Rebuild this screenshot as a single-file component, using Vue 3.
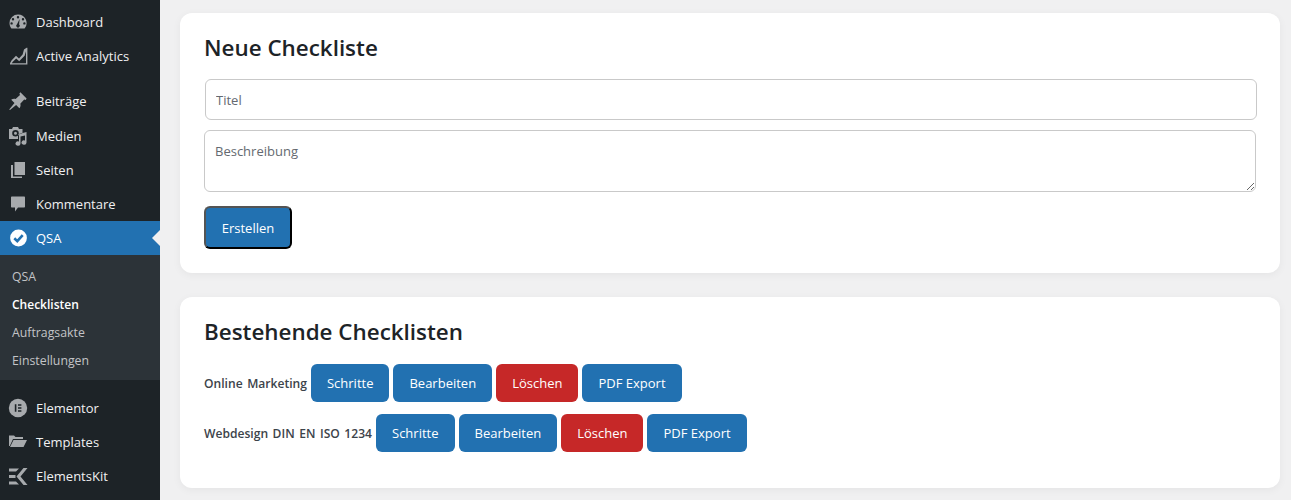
<script setup>
const top = [
  { label: 'Dashboard', icon: 'dash' },
  { label: 'Active Analytics', icon: 'chart' },
]
const mid = [
  { label: 'Beiträge', icon: 'pin' },
  { label: 'Medien', icon: 'media' },
  { label: 'Seiten', icon: 'pages' },
  { label: 'Kommentare', icon: 'comment' },
]
const sub = ['QSA', 'Checklisten', 'Auftragsakte', 'Einstellungen']
const bottom = [
  { label: 'Elementor', icon: 'elementor' },
  { label: 'Templates', icon: 'folder' },
  { label: 'ElementsKit', icon: 'ek' },
]
const paths = {
  dash: 'M10 2.5a8.5 8.5 0 0 0-8.5 8.5c0 2 .7 3.9 1.9 5.4h13.2A8.5 8.5 0 0 0 10 2.5zM10 4a1.2 1.2 0 1 1 0 2.4A1.2 1.2 0 0 1 10 4zM5 6a1.2 1.2 0 1 1 0 2.4A1.2 1.2 0 0 1 5 6zm10 0a1.2 1.2 0 1 1 0 2.4A1.2 1.2 0 0 1 15 6zM3.6 10.2a1.2 1.2 0 1 1 0 2.4 1.2 1.2 0 0 1 0-2.4zm12.8 0a1.2 1.2 0 1 1 0 2.4 1.2 1.2 0 0 1 0-2.4zM11.6 7l-.5 5.6a1.7 1.7 0 1 1-2.2 0z',
  chart: 'M2 18.5V17.2L3.5 14.5 8 9.8 11 12.6 14.6 8.6 16 3.6 18.6 1.8H19.4V18.5H2zM3.8 17.2H18V5.2L16.6 9.8 11.2 15.2 8.2 12.4 4.8 15.8z',
  pin: 'M18.6 7.4 12.4 1.3l-1 1.1.6 1.6-4.4 3.9c-1.5-.5-3.2-.2-4.4.9l3.3 3.3L1.2 18.6 2 18.9l6.1-5 3.3 3.3c1.1-1.2 1.5-2.9.9-4.4l3.9-4.4 1.5.6z',
  media: 'M1 3h3l1-2h5l1 2h3.5v4.4L10 8.4V13H1zM7.5 4a3.3 3.3 0 1 0 0 6.6 3.3 3.3 0 0 0 0-6.6zM7.5 5.8a1.5 1.5 0 1 1 0 3 1.5 1.5 0 0 1 0-3zM18.5 6v10.5a2.5 2.2 0 1 1-1.5-2V9.5l-4.5 1v7a2.5 2.2 0 1 1-1.5-2V8z',
  pages: 'M6.5 2H17v13H6.5zM3 5h2v11.5h9V18H3z',
  comment: 'M4 2.5h12c.6 0 1 .4 1 1v9c0 .6-.4 1-1 1h-6l-3 4v-4H4c-.6 0-1-.4-1-1v-9c0-.6.4-1 1-1z',
  folder: 'M1 14V3.5h5l1.5 1.5H15v2H5L1.8 14zM5.5 8H19l-3.5 7H2z',
  ek: 'M1 2.5h10l-3 3H1zM1 9h6.5v3H1zM1 15.5h7l3 3H1zM15.5 2H19.5L12.5 10.5 19.5 19H15.5L8.5 10.5z',
}
const lists = ['Online Marketing', 'Webdesign DIN EN ISO 1234']
</script>

<template>
  <div class="page">
    <aside class="side">
      <ul class="group">
        <li v-for="i in top" :key="i.label" class="item">
          <svg class="ico" viewBox="0 0 20 20"><path fill-rule="evenodd" :d="paths[i.icon]" /></svg>
          <span>{{ i.label }}</span>
        </li>
      </ul>
      <ul class="group mid">
        <li v-for="i in mid" :key="i.label" class="item">
          <svg class="ico" viewBox="0 0 20 20"><path fill-rule="evenodd" :d="paths[i.icon]" /></svg>
          <span>{{ i.label }}</span>
        </li>
        <li class="item current">
          <svg class="ico" viewBox="0 0 20 20">
            <circle cx="10.5" cy="10" r="8.4" fill="#fff" />
            <path class="tick" d="M6.3 10.3 9.3 13.2 14.7 7.2" />
          </svg>
          <span>QSA</span>
        </li>
      </ul>
      <ul class="submenu">
        <li v-for="s in sub" :key="s" :class="{ on: s === 'Checklisten' }">{{ s }}</li>
      </ul>
      <ul class="group">
        <li v-for="i in bottom" :key="i.label" class="item">
          <svg v-if="i.icon === 'elementor'" class="ico" viewBox="0 0 20 20">
            <circle cx="10" cy="10" r="9.2" />
            <path class="cut" d="M6.800 6.200h1.600v7.600H6.800zM10 6.200h3.400v1.500H10zM10 9.200h3.400v1.500H10zM10 12.300h3.400v1.500H10z" />
          </svg>
          <svg v-else class="ico" viewBox="0 0 20 20"><path fill-rule="evenodd" :d="paths[i.icon]" /></svg>
          <span>{{ i.label }}</span>
        </li>
      </ul>
    </aside>
    <main class="main">
      <section class="card first">
        <h2>Neue Checkliste</h2>
        <input class="title-input" type="text" placeholder="Titel" />
        <textarea class="desc" placeholder="Beschreibung"></textarea>
        <button class="create" type="button">Erstellen</button>
      </section>
      <section class="card second">
        <h2>Bestehende Checklisten</h2>
        <div v-for="l in lists" :key="l" class="row">
          <strong>{{ l }}</strong>
          <a class="btn">Schritte</a>
          <a class="btn">Bearbeiten</a>
          <a class="btn red">Löschen</a>
          <a class="btn">PDF Export</a>
        </div>
      </section>
    </main>
  </div>
</template>

<style>
html, body { margin: 0; background: #f0f0f1; }
</style>

<style scoped>
* { box-sizing: border-box; }
.page {
  display: flex;
  height: 500px;
  overflow: hidden;
  font-family: "Open Sans", "Noto Sans", sans-serif;
  background: #f0f0f1;
}
.side {
  width: 160px;
  flex: none;
  background: #1d2327;
  padding-top: 5px;
  display: flex;
  flex-direction: column;
}
ul { list-style: none; margin: 0; padding: 0; }
.group + .group { margin-top: 11px; }
.submenu + .group { margin-top: 11px; }
.item {
  height: 34px;
  display: flex;
  align-items: center;
  gap: 8px;
  padding-left: 8px;
  color: #f0f0f1;
  font-size: 13px;
  position: relative;
}
.mid .item:first-child { height: 35px; padding-bottom: 1px; }
.ico { width: 20px; height: 20px; flex: none; fill: #a7aaad; }
.current { background: #2271b1; color: #fff; }
.current::after {
  content: "";
  position: absolute;
  right: 0;
  top: 50%;
  margin-top: -8px;
  border: 8px solid transparent;
  border-right-color: #f0f0f1;
}
.tick { fill: none; stroke: #2271b1; stroke-width: 2.6; }
.cut { fill: #1d2327; }
.submenu {
  background: #2c3338;
  padding: 8px 0 5px;
}
.submenu li {
  height: 28px;
  line-height: 28px;
  padding-left: 12px;
  font-size: 12.3px;
  color: #c3c4c7;
}
.submenu .on { color: #fff; font-weight: 600; font-size: 12px; }
.main {
  flex: 1;
  min-width: 0;
  padding: 13px 11px 0 20px;
  display: flex;
  flex-direction: column;
  gap: 24px;
}
.card {
  background: #fff;
  border-radius: 12px;
  box-shadow: 0 2px 8px rgba(0, 0, 0, 0.05);
  padding: 19px 24px;
}
.first { height: 260px; }
.second { height: 191px; }
h2 {
  margin: 0;
  font-size: 22.4px;
  line-height: 31px;
  font-weight: 600;
  color: #1d2327;
}
.title-input, .desc {
  display: block;
  width: 100%;
  border: 1px solid #c9c9c9;
  border-radius: 6px;
  background: #fff;
  font: inherit;
  font-size: 13px;
  color: #2c3338;
  outline: none;
}
.title-input::placeholder, .desc::placeholder { color: #646970; opacity: 1; }
.title-input {
  margin: 16px 0 0 1px;
  height: 41px;
  padding: 0 10px;
}
.desc {
  margin-top: 10px;
  height: 62px;
  padding: 11px 10px;
}
.create {
  display: block;
  margin-top: 14px;
  width: 88px;
  height: 43px;
  border-radius: 6px;
  border: 2px outset #000;
  background: #2271b1;
  color: #fff;
  font: inherit;
  font-size: 13px;
}
.second h2 { margin-bottom: 17px; }
.row {
  display: flex;
  align-items: center;
  gap: 4px;
  margin-bottom: 12px;
}
.row strong {
  font-size: 12.1px;
  word-spacing: 1.4px;
  font-weight: 600;
  color: #3c434a;
}
.btn {
  height: 38px;
  line-height: 38px;
  padding: 0 16px;
  border-radius: 6px;
  background: #2271b1;
  color: #fff;
  font-size: 13px;
}
.red { background: #c62828; }
</style>
